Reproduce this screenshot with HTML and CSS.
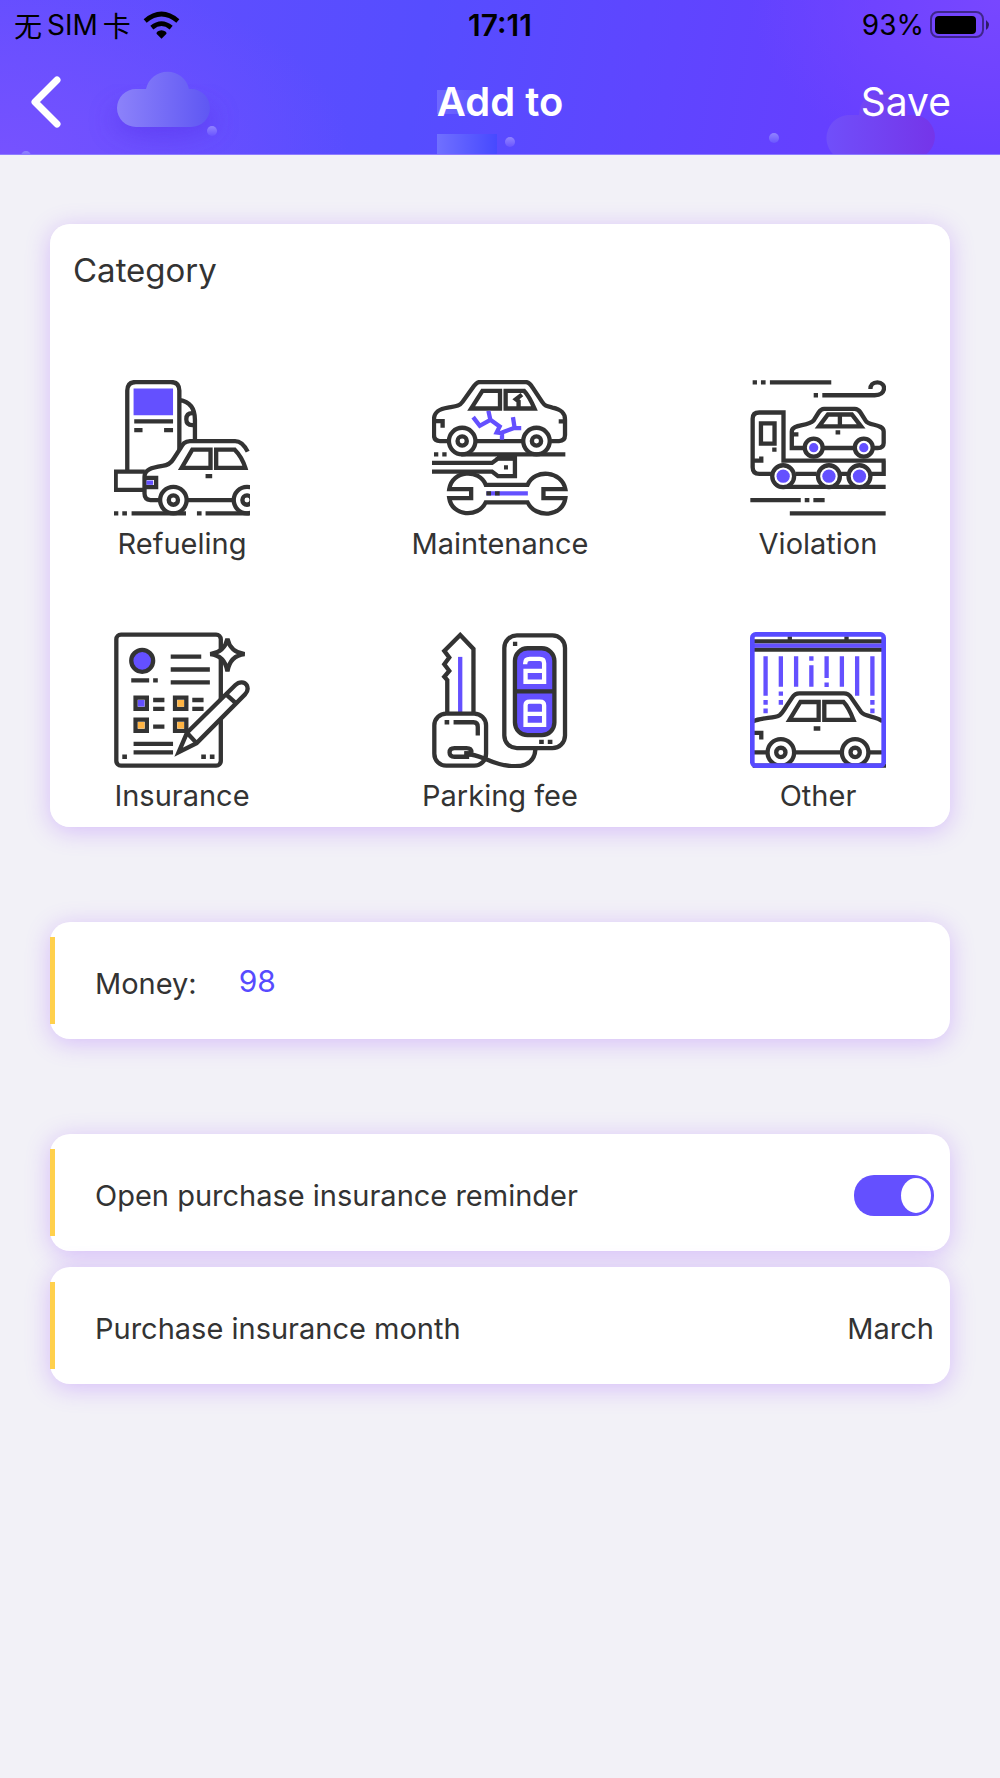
FILE: index.html
```html
<!DOCTYPE html>
<html lang="en">
<head>
<meta charset="utf-8">
<meta name="viewport" content="width=device-width, initial-scale=1">
<title>Add to</title>
<link rel="stylesheet" href="styles.css">
</head>
<body>
<header class="header">
  <svg class="header-art" viewBox="0 0 1000 155" preserveAspectRatio="xMidYMin slice" aria-hidden="true">
    <defs>
      <linearGradient id="cloud"><stop offset="0" stop-color="#8c82fa"/><stop offset="1" stop-color="#5f57f3"/></linearGradient>
      <linearGradient id="cloud2"><stop offset="0" stop-color="#704ffa"/><stop offset="1" stop-color="#7535e9"/></linearGradient>
      <linearGradient id="block"><stop offset="0" stop-color="#7070ff"/><stop offset="1" stop-color="#4749ff"/></linearGradient>
      <linearGradient id="block2"><stop offset="0" stop-color="#6f68ff"/><stop offset="1" stop-color="#6f68ff" stop-opacity="0"/></linearGradient>
      <linearGradient id="dot" x2="0" y2="1"><stop offset="0" stop-color="#9184ff"/><stop offset="1" stop-color="#6a55ff"/></linearGradient>
      <filter id="soft" x="-50%" y="-50%" width="200%" height="200%"><feGaussianBlur stdDeviation="12"/></filter>
    </defs>
    <ellipse cx="164" cy="120" rx="52" ry="18" fill="#5836ec" opacity=".55" filter="url(#soft)"/>
    <path d="M136 127a19 19 0 0 1 0-38h10a22 22 0 0 1 43 0h2a19 19 0 0 1 0 38z" fill="url(#cloud)"/>
    <path d="M834 155a23 23 0 0 1 16-40h9a24 24 0 0 1 48 0h2a22 22 0 0 1 16 40z" fill="url(#cloud2)"/>
    <rect x="437" y="90" width="56" height="24" fill="url(#block2)"/>
    <rect x="437" y="134" width="60" height="21" fill="url(#block)"/>
    <g fill="url(#dot)"><circle cx="212" cy="131" r="5"/><circle cx="510" cy="142" r="5"/><circle cx="774" cy="138" r="5"/><circle cx="26" cy="156" r="5"/></g>
  </svg>
  <div class="status">
    <div class="status-left">
      <span class="carrier"><span>无</span><span>SIM</span><span>卡</span></span>
      <svg width="37" height="28" viewBox="0 0 110 84" aria-hidden="true">
        <path d="M55 83 40 68q-1-7 15-10 16 3 15 10z"/>
        <path d="M26 50q29-24 58 0" fill="none" stroke="#000" stroke-width="14"/>
        <path d="M6 30q49-42 98 0" fill="none" stroke="#000" stroke-width="14"/>
      </svg>
    </div>
    <time class="clock">17:11</time>
    <div class="status-right">
      <span>93%</span>
      <svg width="60" height="28" viewBox="0 0 60 28" aria-hidden="true">
        <rect x="1" y="1" width="52" height="25" rx="7" fill="none" stroke="#000" stroke-opacity=".45" stroke-width="2"/>
        <rect x="5" y="5" width="41" height="18" rx="4"/>
        <path d="M56 9q6 5 0 10z" opacity=".6"/>
      </svg>
    </div>
  </div>
  <nav class="nav">
    <button class="back" type="button" aria-label="Back">
      <svg width="30" height="52" viewBox="0 0 30 52" aria-hidden="true"><path d="M26 4 4 26l22 22" fill="none" stroke="#fff" stroke-width="7" stroke-linecap="round" stroke-linejoin="round"/></svg>
    </button>
    <h1 class="title">Add to</h1>
    <button class="save" type="submit" form="expense">Save</button>
  </nav>
</header>

<form class="form" id="expense">
  <fieldset class="card category">
    <legend class="category-title">Category</legend>
    <div class="options">
      <label class="option">
        <input type="radio" name="category" value="refueling">
        <svg class="icon" viewBox="41 30 410 410" aria-hidden="true">
          <path d="M81 305V62q0-26 26-26h105q26 0 26 26v178M238 90q47 8 47 60v62M102 155h117M102 181h25M192 181h27"/>
          <path d="M285 130h-8q-18 0-18 18t18 18h8"/>
          <path class="accent" d="M100 56h119v80H100z"/>
          <path d="M134 306H46v55h86"/>
          <path d="M444 246c-9-18-20-32-38-32H270c-16 0-22 10-29 22l-20 31c-8 14-17 20-34 22-34 5-54 12-54 33v50q0 18 18 20h25M260 392h140"/>
          <path d="M134 325h34v28h-34"/><path class="accent" d="M139 333h20v13h-20z"/>
          <path d="M277 240h55v55h-87zM349 240h56q22 22 32 55h-88zM317 320h20"/>
          <circle cx="220" cy="392" r="40"/><circle cx="220" cy="392" r="14"/><circle cx="442" cy="392" r="40"/><circle cx="442" cy="392" r="14"/>
          <path d="M40 432h14M66 432h14M94 432h164M291 432h14M317 432h133"/>
        </svg>
        <span>Refueling</span>
      </label>
      <label class="option">
        <input type="radio" name="category" value="maintenance">
        <svg class="icon" viewBox="36 30 410 410" aria-hidden="true">
          <path d="M84 214H60q-18 0-18-18v-47c0-24 17-32 42-36 24-4 35-4 44-17l30-42q12-18 22-18h138q12 0 22 18l28 42c9 13 14 13 31 17 24 5 38 14 38 36v47q0 18-18 18h-24M170 214h140"/>
          <path d="M188 63h53v53h-87zM258 63h56q14 14 31 53h-87zM297 110V94l-8-6 18-14M42 154h26v20M438 155h-20"/>
          <path class="accent-line" d="m160 142 20 26 32-18-6-27M212 150l28 20-9 18 16 2v20M247 188l38-14-5-32M285 175h20"/>
          <circle cx="127" cy="214" r="40"/><circle cx="127" cy="214" r="14"/><circle cx="351" cy="214" r="40"/><circle cx="351" cy="214" r="14"/>
          <path d="M42 254h13M67 254h13M124 254h314M35 280h182l18-13h51v53h-51l-18-14H35"/>
          <path class="ink" d="M228 262h58v10h-58zM253 287h12v13h-12z"/>
          <path d="M88 359c8-58 91-62 110-13h126c22-50 104-42 114 13h-66v27h66c-8 58-90 62-114 13H198c-23 48-102 42-110-13h66v-27z"/>
          <path class="accent-line" d="M200 372h125"/><path d="M200 372h14M226 372h14"/>
        </svg>
        <span>Maintenance</span>
      </label>
      <label class="option">
        <input type="radio" name="category" value="violation">
        <svg class="icon" viewBox="30 30 410 410" aria-hidden="true">
          <path d="M38 37h13M63 37h14M90 37h185M222 76h13M248 76h158c36 0 36-39 8-39-14 0-21 9-21 20"/>
          <path d="M98 313H58q-20 0-20-20V147q0-19 20-19h73v145h308M38 273h26v-12M63 161h41v61H63zM97 240h13M433 273v40h-38M167 313h64M303 313h20M102 335q8 17 30 17h307"/>
          <path d="M192 235h-36v-50c0-23 47-14 65-32l16-25q7-11 16-11h93q10 0 17 11l16 25c9 15 54 10 54 32v35q0 15-18 15h-18M252 235h90M156 194h20M265 134h72l28 36H238zM301 134v36M288 188h14"/>
          <g class="ink-wheel"><circle cx="130" cy="320" r="33"/><circle cx="268" cy="320" r="33"/><circle cx="360" cy="320" r="33"/><circle cx="222" cy="234" r="27"/><circle cx="373" cy="234" r="27"/></g>
          <g class="accent"><circle cx="130" cy="320" r="20"/><circle cx="268" cy="320" r="20"/><circle cx="360" cy="320" r="20"/><circle cx="222" cy="234" r="14"/><circle cx="373" cy="234" r="14"/></g>
          <path d="M31 392h152M195 392h14M221 392h34M150 432h289"/>
        </svg>
        <span>Violation</span>
      </label>
      <label class="option">
        <input type="radio" name="category" value="insurance">
        <svg class="icon" viewBox="41 35 410 410" aria-hidden="true">
          <rect x="48" y="43" width="315" height="395" rx="14"/>
          <circle cx="126" cy="122" r="33" fill="#6450ff"/>
          <path d="M93 181h54M159 181h14M212 109h92M212 148h118M212 187h118M159 240h34M159 267h34M277 240h34M277 267h34M159 320h34M100 372h119M100 398h119M66 411h14M304 411h14M330 411h14"/>
          <path d="M106 233h34v34h-34zM106 299h34v34h-34zM225 233h34v34h-34zM225 299h34v34h-34z"/>
          <path class="accent" d="M113 240h20v20h-20z"/><path class="amber" d="M113 306h20v20h-20zM232 240h20v20h-20zM232 306h20v20h-20z"/>
          <path d="M383 55q8 40 52 47-44 4-52 52-8-48-52-52 44-7 52-47z" fill="#fff"/>
          <path d="m236 397 25-58 146-144c12-12 28-10 34 0 6 12 2 21-5 28L290 370zM261 339l29 31M378 222l32 29" fill="#fff"/>
        </svg>
        <span>Insurance</span>
      </label>
      <label class="option">
        <input type="radio" name="category" value="parking">
        <svg class="icon" viewBox="36 35 410 410" aria-hidden="true">
          <path d="M82 280V180l-9-10 15-18-15-20 15-20-15-20 48-48 40 42v194"/>
          <path class="accent-line" d="M121 110v168"/>
          <rect x="43" y="281" width="156" height="157" rx="36"/>
          <path d="M74 307h14M101 307h60q13 0 13 14v26M148 411h-44q-15 0-15-13t15-13h36q15 0 15 13M135 402c45 2 61 20 104 31 68 17 106 2 109-46"/>
          <path class="ink" d="M133 394h20v17h-20z"/>
          <rect x="254" y="45" width="183" height="340" rx="38"/>
          <rect x="286" y="84" width="119" height="262" rx="38" fill="#6450ff"/>
          <path d="M286 214h120M280 71h13M359 366h14M385 366h14"/>
          <path class="white-line" d="M317 132v-3q0-13 14-13h30q13 0 13 13v56h-56v-33h56M318 315v-59q0-11 13-11h30q13 0 13 11v59zM318 282h56"/>
        </svg>
        <span>Parking fee</span>
      </label>
      <label class="option">
        <input type="radio" name="category" value="other" checked>
        <svg class="icon" viewBox="30 35 410 410" aria-hidden="true">
          <path d="M40 63h390M40 88h390M150 48v14M321 48v14M38 438h402"/>
          <path class="accent-line" d="M40 76h390M77 108v119M77 240v14M77 266v14M123 108v92M123 214v13M123 240v14M169 108v92M215 108v14M215 135v65M261 108v66M261 187v14M307 108v92M353 108v119M399 108v119M399 240v14M399 266v14"/>
          <path d="M40 304c24-12 65-8 79-18 8-6 14-16 20-26l18-27q8-13 22-13h134q14 0 22 13l30 43c11 15 45 12 65 28M40 398h42M166 398h140M390 398h44M182 246h55v54h-88zM254 246h58q15 15 30 54h-88zM222 326h20M40 339h24v20"/>
          <circle cx="123" cy="398" r="40"/><circle cx="123" cy="398" r="14"/><circle cx="347" cy="398" r="40"/><circle cx="347" cy="398" r="14"/>
          <rect class="frame" x="37" y="42" width="396" height="396" rx="10"/>
        </svg>
        <span>Other</span>
      </label>
    </div>
  </fieldset>

  <div class="card row">
    <label class="money-label" for="money">Money:</label>
    <input class="money" id="money" type="text" inputmode="decimal" value="98">
  </div>

  <div class="group">
    <div class="card row">
      <label class="row-label" for="reminder">Open purchase insurance reminder</label>
      <input class="switch" id="reminder" type="checkbox" role="switch" checked>
    </div>
    <div class="card row">
      <label class="row-label" for="month">Purchase insurance month</label>
      <select class="month" id="month">
        <option>January</option><option>February</option><option selected>March</option><option>April</option>
        <option>May</option><option>June</option><option>July</option><option>August</option>
        <option>September</option><option>October</option><option>November</option><option>December</option>
      </select>
    </div>
  </div>
</form>
</body>
</html>
```
FILE: styles.css
```css
* { box-sizing: border-box; }
body {
  margin: 0;
  min-height: 100vh;
  background: #f2f1f7;
  color: #333;
  font-family: Inter, "Noto Sans CJK SC", sans-serif;
  font-size: 29px;
}
button, input, select { font: inherit; color: inherit; border: 0; background: none; padding: 0; margin: 0; }

.header {
  position: relative;
  height: 155px;
  overflow: hidden;
  border-bottom: 1px solid #8e7cff;
  background:
    radial-gradient(ellipse 35% 120% at 0% 100%, #7652ff, transparent),
    radial-gradient(ellipse 25% 110% at 100% 0%, #7847ff, transparent),
    linear-gradient(100deg, #644eff 0%, #564dff 42%, #663fff 85%);
}
.header-art { position: absolute; inset: 0; width: 100%; height: 100%; }
.status, .nav { position: relative; display: grid; grid-template-columns: 1fr auto 1fr; align-items: center; }
.status { height: 50px; padding: 0 14px; color: #000; font-size: 28px; }
.status-left, .status-right, .carrier { display: flex; align-items: center; }
.status-left { gap: 12px; }
.status-right { justify-content: flex-end; gap: 6px; margin-right: -4px; }
.carrier { gap: 5px; }
.clock { font-size: 30px; font-weight: 600; }
.nav { height: 104px; padding: 0 31px; color: #fff; }
.back { justify-self: start; height: 52px; }
.title { margin: 0; font-size: 40px; font-weight: 600; line-height: 48px; }
.save { justify-self: end; margin-right: 18px; font-size: 39px; line-height: 48px; }

.form { padding: 69px 50px; display: grid; gap: 95px; }
.card {
  margin: 0;
  border: 0;
  border-radius: 20px;
  background: #fff;
  box-shadow: 0 4px 24px rgba(155, 80, 255, .32);
}
.category { min-width: 0; height: 603px; padding: 24px 32px 0; }
.category-title { float: left; width: 100%; padding: 0; margin-left: -9px; font-size: 33px; line-height: 44px; }
.options {
  clear: both;
  padding-top: 88px;
  display: grid;
  grid-template-columns: repeat(3, 200px);
  justify-content: space-between;
  row-gap: 68px;
}
.option { display: flex; flex-direction: column; align-items: center; gap: 8px; line-height: 40px; position: relative; }
.option input { position: absolute; appearance: none; width: 1px; height: 1px; }
.icon { width: 136px; height: 136px; fill: none; stroke: #333; stroke-width: 13; }
.icon .accent { fill: #6450ff; stroke: none; }
.icon .amber { fill: #ffb443; stroke: none; }
.icon .ink { fill: #333; stroke: none; }
.icon .ink-wheel { fill: #fff; }
.icon .accent-line { stroke: #6450ff; }
.icon .white-line { stroke: #fff; }
.icon .frame { stroke: #574bff; stroke-width: 14; }

.group { display: grid; gap: 16px; }
.row { display: flex; align-items: center; height: 117px; padding: 15px 16px 15px 0; }
.row::before { content: ""; align-self: stretch; width: 5px; margin-right: 40px; background: #ffd04c; }
.row-label, .money-label, .month { padding-top: 5px; }
.row-label { flex: 1; }
.money-label { margin-right: 42px; }
.money { flex: 1; min-width: 0; color: #574bff; font-size: 30px; }
.switch {
  appearance: none;
  width: 80px;
  height: 41px;
  margin-top: 5px;
  padding: 3px;
  display: flex;
  justify-content: flex-start;
  border-radius: 20px;
  background: #ccc;
}
.switch:checked { justify-content: flex-end; background: #6450ff; }
.switch::before { content: ""; width: 30px; height: 35px; border-radius: 50%; background: #fff; }
.month { appearance: none; width: 160px; text-align: right; text-align-last: right; }
```
